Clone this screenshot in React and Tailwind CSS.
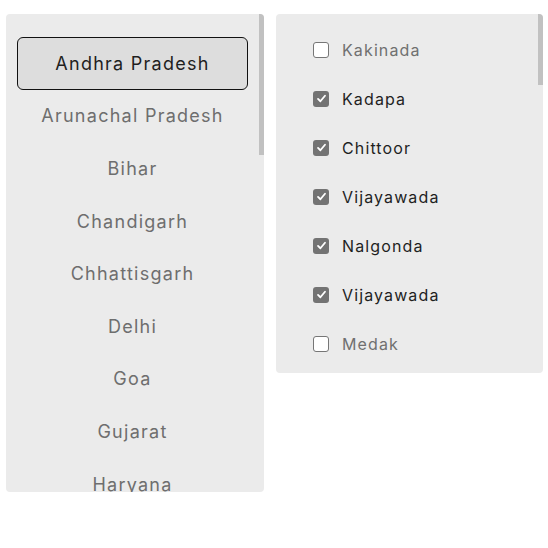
import React, { useState } from 'react';

const states = [
  'Andhra Pradesh', 'Arunachal Pradesh', 'Bihar', 'Chandigarh', 'Chhattisgarh',
  'Delhi', 'Goa', 'Gujarat', 'Haryana', 'Himachal Pradesh', 'Jharkhand', 'Karnataka',
];

const initialCities = [
  { name: 'Kakinada', checked: false },
  { name: 'Kadapa', checked: true },
  { name: 'Chittoor', checked: true },
  { name: 'Vijayawada', checked: true },
  { name: 'Nalgonda', checked: true },
  { name: 'Vijayawada', checked: true },
  { name: 'Medak', checked: false },
  { name: 'Guntur', checked: false },
  { name: 'Nellore', checked: false },
];

function Checkbox({ checked }) {
  if (checked) {
    return (
      <span className="w-4 h-4 rounded-[3px] bg-[#737373] flex items-center justify-center shrink-0">
        <svg width="11" height="11" viewBox="0 0 12 12" fill="none">
          <path d="M2.2 6.4 L4.8 9 L9.8 3" stroke="white" strokeWidth="2" strokeLinecap="round" strokeLinejoin="round" />
        </svg>
      </span>
    );
  }
  return <span className="w-4 h-4 rounded-[3px] bg-white border border-[#767676] shrink-0" />;
}

export default function App() {
  const [selected, setSelected] = useState(0);
  const [cities, setCities] = useState(initialCities);

  const toggle = (i) => {
    setCities(prev => prev.map((c, idx) => idx === i ? { ...c, checked: !c.checked } : c));
  };

  return (
    <div className="w-[548px] h-[548px] bg-white flex items-start gap-3 pl-[6px] pt-[14px]" style={{ fontFamily: 'Inter, "Noto Sans", sans-serif' }}>
      {/* States list */}
      <div className="relative w-[258px] h-[478px] bg-[#ebebeb] rounded-[4px] overflow-hidden">
        <div className="w-[253px] pt-[23px] flex flex-col">
          {states.map((s, i) => (
            <button
              key={s}
              onClick={() => setSelected(i)}
              className={`mx-[11px] h-[52.6px] shrink-0 flex items-center justify-center text-[18px] tracking-[0.07em] rounded-[6px] ${
                selected === i
                  ? 'bg-[#dddddd] border-[1.5px] border-[#111] text-[#1f1f1f]'
                  : 'text-[#6e6e6e]'
              }`}
            >
              {s}
            </button>
          ))}
        </div>
        <div className="absolute right-0 top-0 w-[5px] h-[141px] bg-[#c1c1c1]" />
      </div>

      {/* Cities list */}
      <div className="relative w-[267px] h-[359px] bg-[#ebebeb] rounded-[4px] overflow-hidden">
        <div className="pl-[37px] pt-[11px] flex flex-col">
          {cities.map((c, i) => (
            <label key={i} onClick={() => toggle(i)} className="h-[49px] shrink-0 flex items-center gap-[13px] cursor-pointer">
              <Checkbox checked={c.checked} />
              <span className={`text-[16px] tracking-[0.07em] ${c.checked ? 'text-[#1f1f1f]' : 'text-[#707070]'}`}>{c.name}</span>
            </label>
          ))}
        </div>
        <div className="absolute right-0 top-0 w-[5px] h-[71px] bg-[#c1c1c1]" />
      </div>
    </div>
  );
}
